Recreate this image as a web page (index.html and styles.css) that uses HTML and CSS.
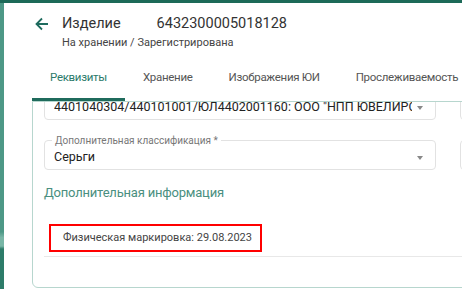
FILE: index.html
```html
<!DOCTYPE html>
<html lang="ru">
<head>
    <meta charset="UTF-8">
    <meta name="viewport" content="width=device-width, initial-scale=1.0">
    <title>Изделие</title>
    <link rel="stylesheet" href="styles.css">
</head>
<body>
    <div class="shell">
        <div class="rail"></div>
        <main class="main">
            <!-- Header -->
            <header class="head">
                <button class="back" aria-label="Назад">
                    <svg width="14" height="14" viewBox="0 0 14 14">
                        <path d="M13 7H2M7 1.5L1.5 7L7 12.5" fill="none" stroke="#1e6b5e" stroke-width="1.8"/>
                    </svg>
                </button>
                <div class="titles">
                    <div class="title-row">
                        <span class="title">Изделие</span>
                        <span class="code">6432300005018128</span>
                    </div>
                    <div class="status">На хранении / Зарегистрирована</div>
                </div>
            </header>

            <!-- Tabs -->
            <nav class="tabs">
                <a class="tab active">Реквизиты</a>
                <a class="tab">Хранение</a>
                <a class="tab">Изображения ЮИ</a>
                <a class="tab">Прослеживаемость</a>
            </nav>

            <!-- Card -->
            <section class="card">
                <div class="row row-cut">
                    <div class="field">
                        <span class="value">4401040304/440101001/ЮЛ4402001160: ООО "НПП ЮВЕЛИРСЕРВИС"</span>
                        <span class="caret"></span>
                    </div>
                    <div class="field"></div>
                </div>
                <div class="row row-next">
                    <div class="field">
                        <span class="label">Дополнительная классификация *</span>
                        <span class="value">Серьги</span>
                        <span class="caret"></span>
                    </div>
                    <div class="field"></div>
                </div>

                <h2 class="section-title">Дополнительная информация</h2>

                <div class="info-row">
                    <span class="mark">Физическая маркировка: 29.08.2023</span>
                </div>
            </section>
        </main>
    </div>
</body>
</html>
```

FILE: styles.css
```css
* {
    box-sizing: border-box;
    margin: 0;
    padding: 0;
}

body {
    font-family: Roboto, 'Noto Sans', sans-serif;
    background-color: #fff;
    color: #333;
    width: 462px;
    height: 289px;
    overflow: hidden;
}

.shell {
    display: flex;
    height: 289px;
    border-top: 3px solid #1d6a58;
}

.rail {
    width: 4px;
    flex-shrink: 0;
    background: linear-gradient(#4d9886 0%, #4d9886 80%, #78b6a6 82%, #78b6a6 85%, #2d7c69 86%, #2d7c69 100%);
}

.main {
    flex: 1;
    min-width: 0;
}

/* Header */
.head {
    display: flex;
    align-items: flex-start;
    padding: 11px 0 0 31px;
}

.back {
    border: none;
    background: none;
    width: 27px;
    height: 20px;
    display: flex;
    align-items: center;
    cursor: pointer;
}

.title-row {
    display: flex;
    gap: 36px;
    font-size: 14.5px;
    line-height: 20px;
    color: #333;
}

.status {
    margin-top: 1px;
    font-size: 11px;
    line-height: 16px;
    color: #444;
}

/* Tabs */
.tabs {
    display: flex;
    margin-left: 28px;
    white-space: nowrap;
}

.tab {
    padding: 18px 18px 13px 18px;
    font-size: 11.5px;
    letter-spacing: -0.3px;
    line-height: 16px;
    color: #555;
    border-bottom: 3px solid transparent;
    cursor: pointer;
}

.tab.active {
    color: #2b7a6a;
    border-bottom-color: #1f6b5c;
}

/* Card */
.card {
    margin-left: 28px;
    width: 470px;
    height: 187px;
    border: 1px solid #b7d6ce;
    border-radius: 0 0 6px 6px;
    padding-left: 11px;
    overflow: hidden;
}

.row {
    display: grid;
    grid-template-columns: 392px 1fr;
    gap: 24px;
}

.row-cut {
    margin-top: -12px;
}

.row-next {
    margin-top: 20px;
}

.field {
    position: relative;
    height: 30px;
    border: 1px solid #e2e2e2;
    border-radius: 4px;
    display: flex;
    align-items: flex-start;
    padding: 8px 12px 4px 9px;
    gap: 5px;
}

.value {
    flex: 1;
    min-width: 0;
    font-size: 12.5px;
    line-height: 16px;
    white-space: nowrap;
    overflow: hidden;
    color: #222;
}

.caret {
    margin-top: 7px;
    border-left: 3.5px solid transparent;
    border-right: 3.5px solid transparent;
    border-top: 4px solid #888;
}

.label {
    position: absolute;
    top: -6px;
    left: 7px;
    padding: 0 3px;
    background: #fff;
    font-size: 10px;
    line-height: 11px;
    color: #777;
}

.section-title {
    margin-top: 13px;
    font-size: 13px;
    letter-spacing: -0.2px;
    line-height: 20px;
    font-weight: 400;
    color: #4a8f80;
}

.info-row {
    margin-top: 21px;
    padding: 0 0 4px 5px;
    border-bottom: 1px solid #e8e8e8;
}

.mark {
    display: inline-block;
    border: 2px solid #ff0000;
    padding: 5px 8px 5px 12px;
    font-size: 11px;
    line-height: 14px;
    color: #444;
}
```
